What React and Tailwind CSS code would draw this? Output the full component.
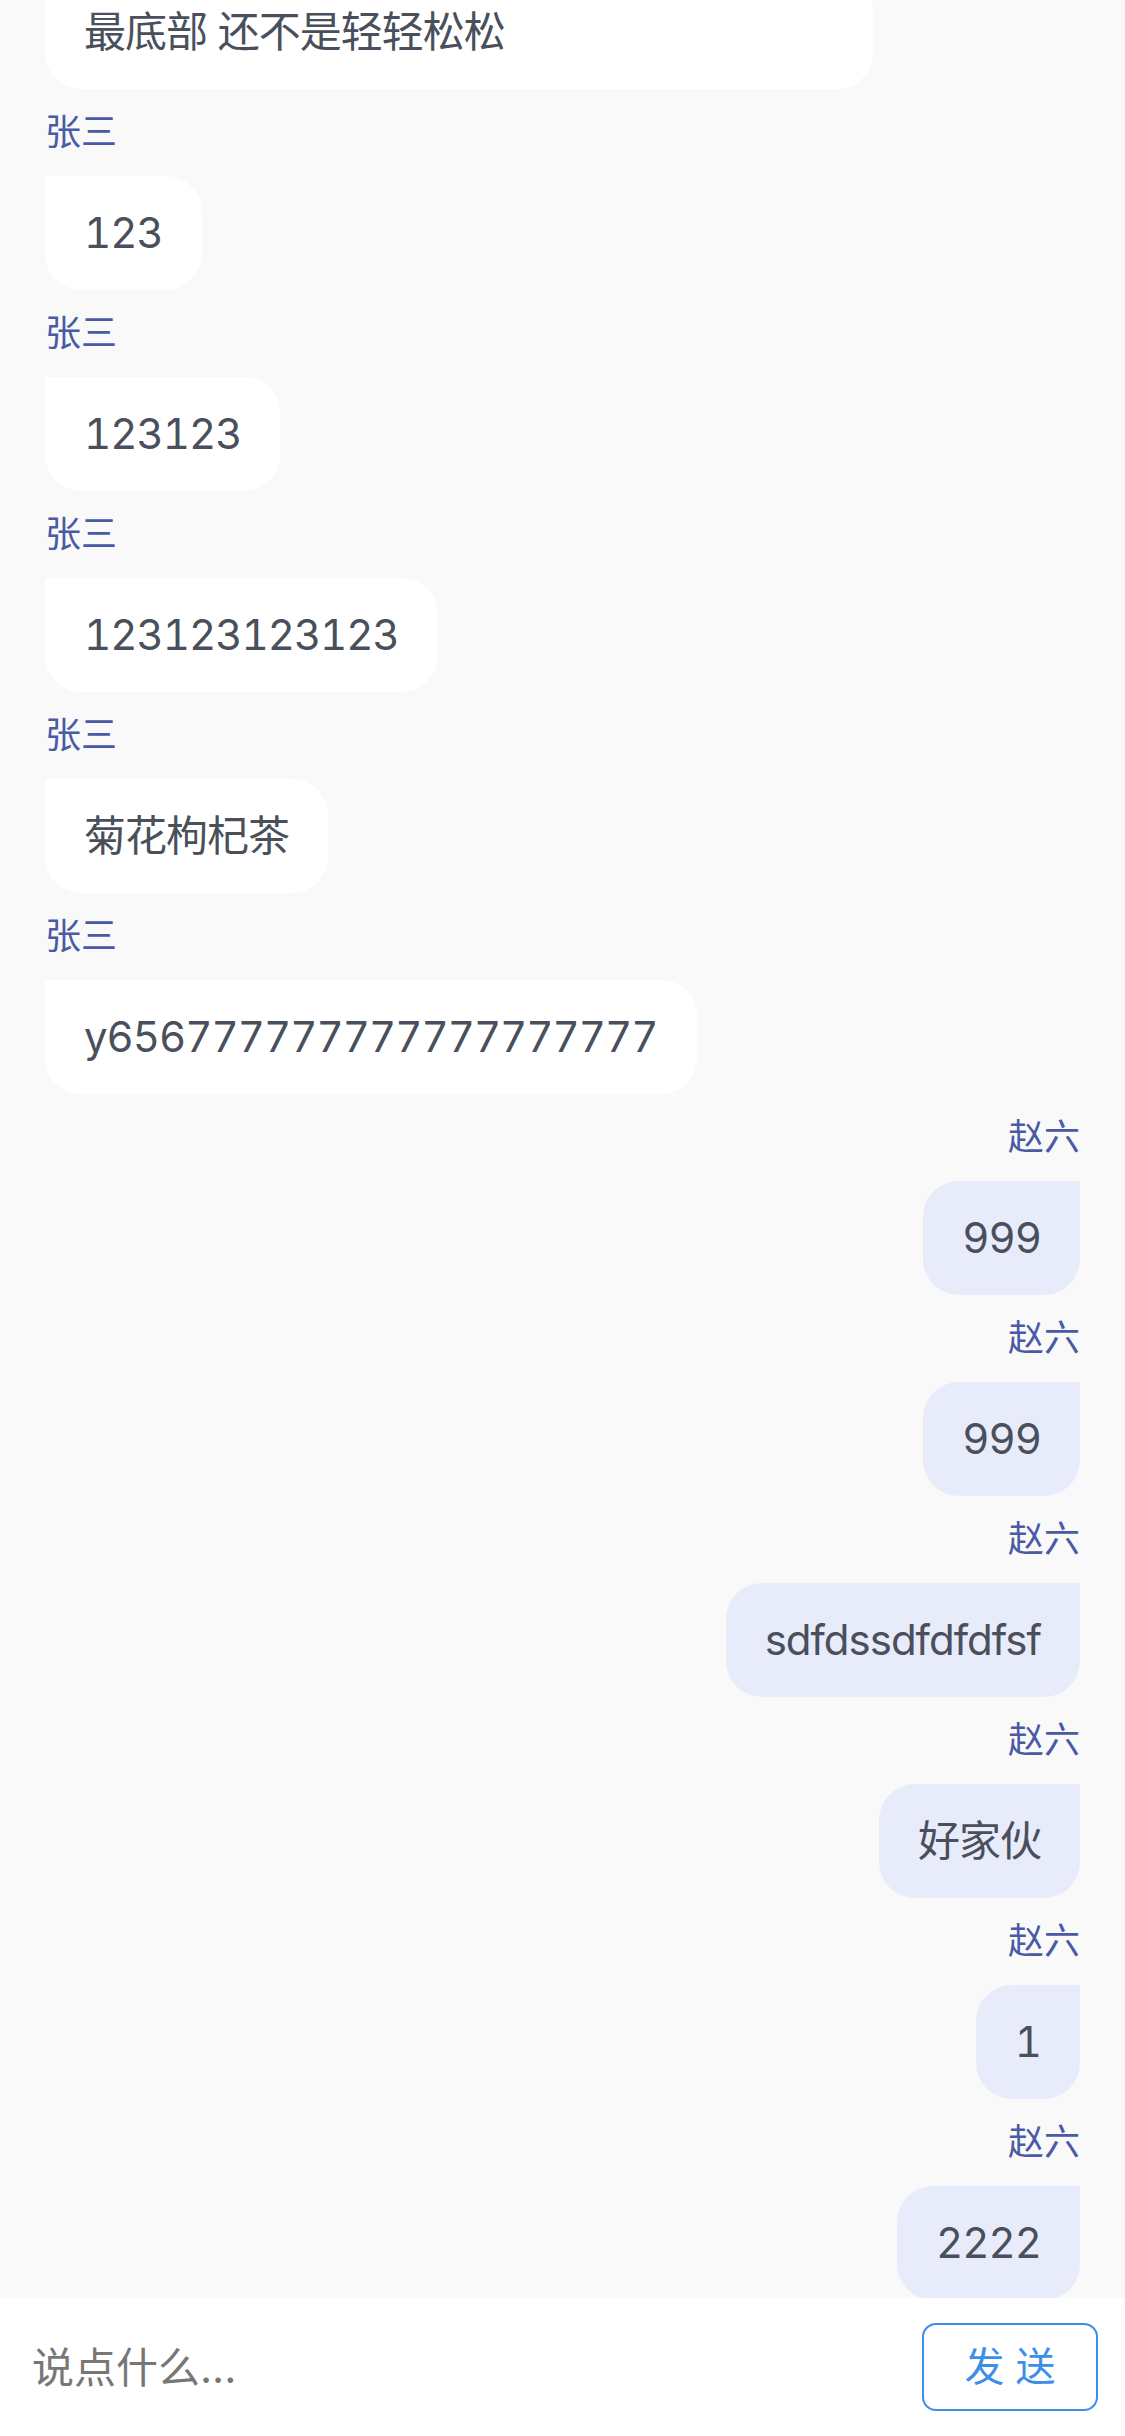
import { useState } from 'react';

const messages = [
    { name: '张三', text: '123', mine: false },
    { name: '张三', text: '123123', mine: false },
    { name: '张三', text: '123123123123', mine: false },
    { name: '张三', text: '菊花枸杞茶', mine: false },
    { name: '张三', text: 'y656777777777777777777', mine: false },
    { name: '赵六', text: '999', mine: true },
    { name: '赵六', text: '999', mine: true },
    { name: '赵六', text: 'sdfdssdfdfdfsf', mine: true },
    { name: '赵六', text: '好家伙', mine: true },
    { name: '赵六', text: '1', mine: true },
    { name: '赵六', text: '2222', mine: true },
];

function Message({ name, text, mine }) {
    return (
        <div className={`flex flex-col ${mine ? 'items-end' : 'items-start'} mt-[18px]`}>
            <div className="text-[36px] leading-[50px] text-[#4a5aa5] mb-[19px]">{name}</div>
            <div
                className={`px-[39px] py-[24px] text-[42px] leading-[66px] tracking-[-1px] text-[#4a4f5c] tabular-nums max-w-[828px] break-all ${
                    mine
                        ? 'bg-[#e8ecfa] rounded-[36px] rounded-tr-none'
                        : 'bg-white rounded-[36px] rounded-tl-none'
                }`}
            >
                {text}
            </div>
        </div>
    );
}

export default function App() {
    const [value, setValue] = useState('');

    return (
        <div
            className="min-h-[2436px] bg-[#f9f9f9] overflow-hidden"
            style={{ fontFamily: 'Inter, "Noto Sans CJK SC", sans-serif' }}
        >
            {/* Messages */}
            <div className="px-[45px] -mt-[112px] pb-[160px]">
                <div className="flex flex-col items-start mt-[18px]">
                    <div className="text-[36px] leading-[50px] text-[#4a5aa5] mb-[19px]">张三</div>
                    <div className="w-[828px] px-[39px] py-[24px] text-[42px] leading-[66px] tracking-[-1px] text-[#4a4f5c] bg-white rounded-[36px] rounded-tl-none">
                        最底部 还不是轻轻松松
                    </div>
                </div>
                {messages.map((m, i) => (
                    <Message key={i} {...m} />
                ))}
            </div>

            {/* Input bar */}
            <div className="fixed bottom-0 left-0 right-0 h-[138px] bg-white flex items-center pl-[32px] pr-[27px]">
                <input
                    value={value}
                    onChange={(e) => setValue(e.target.value)}
                    placeholder="说点什么..."
                    className="flex-1 text-[42px] text-[#333] placeholder:text-[#777] outline-none bg-transparent"
                />
                <button className="w-[176px] h-[88px] border-[2px] border-[#3d8ee8] rounded-[14px] text-[#3d8ee8] text-[40px] leading-none">
                    发 送
                </button>
            </div>
        </div>
    );
}
